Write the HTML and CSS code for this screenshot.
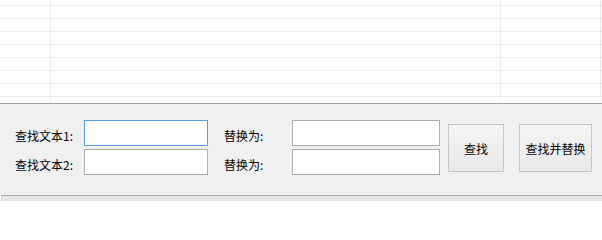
FILE: index.html
```html
<!DOCTYPE html>
<html lang="zh">
<head>
<meta charset="utf-8">
<title>查找替换</title>
<link rel="stylesheet" href="styles.css">
</head>
<body>
<div class="grid">
  <div class="c"></div><div class="c"></div><div class="c"></div><div class="c"></div>
  <div class="c"></div><div class="c"></div><div class="c"></div><div class="c"></div>
  <div class="c"></div><div class="c"></div><div class="c"></div><div class="c"></div>
  <div class="c"></div><div class="c"></div><div class="c"></div><div class="c"></div>
  <div class="c"></div><div class="c"></div><div class="c"></div><div class="c"></div>
  <div class="c"></div><div class="c"></div><div class="c"></div><div class="c"></div>
  <div class="c"></div><div class="c"></div><div class="c"></div><div class="c"></div>
  <div class="c"></div><div class="c"></div><div class="c"></div><div class="c"></div>
  <div class="c"></div><div class="c"></div><div class="c"></div><div class="c"></div>
</div>
<div class="spacer"></div>
<div class="panel">
  <div class="form">
    <label class="lbl">查找文本1:</label>
    <div class="field"><input class="box focused" type="text"></div>
    <label class="lbl">替换为:</label>
    <div class="field"><input class="box wide" type="text"></div>
    <button class="btn find">查找</button>
    <button class="btn replace">查找并替换</button>
    <label class="lbl">查找文本2:</label>
    <div class="field"><input class="box" type="text"></div>
    <label class="lbl">替换为:</label>
    <div class="field"><input class="box wide" type="text"></div>
  </div>
</div>
<div class="status"></div>
</body>
</html>
```

FILE: styles.css
```css
html, body {
  margin: 0;
  padding: 0;
}
body {
  width: 602px;
  height: 201px;
  overflow: hidden;
  background: #ffffff;
  font-family: "Noto Sans CJK SC", "Noto Sans", sans-serif;
  font-size: 12px;
  color: #000;
}
.grid {
  display: grid;
  grid-template-columns: 50px 449px 99px 1px;
  grid-template-rows: 5px repeat(7, 12px) 5px;
  gap: 1px;
  background: #ececec;
}
.c {
  background: #ffffff;
}
.spacer {
  height: 1px;
  background: #ffffff;
}
.panel {
  height: 91px;
  border-top: 1px solid #a5a5a5;
  background: #f0f0f0;
  box-sizing: content-box;
}
.form {
  display: grid;
  grid-template-columns: 69px 140px 68px 156px 71px 73px;
  grid-template-rows: 26px 26px;
  row-gap: 3px;
  padding: 16px 0 0 15px;
}
.lbl {
  line-height: 26px;
  padding-top: 3px;
  height: 26px;
  box-sizing: border-box;
  white-space: nowrap;
}
.field {
  display: flex;
}
.box {
  box-sizing: border-box;
  width: 124px;
  height: 26px;
  margin: 0;
  padding: 0 3px;
  border: 1px solid #acacac;
  background: #ffffff;
  outline: none;
  font: inherit;
}
.box.wide {
  width: 148px;
}
.box.focused {
  border-color: #569de5;
}
.btn {
  grid-row: 1 / span 2;
  align-self: start;
  margin: 4px 0 0 0;
  height: 48px;
  padding: 0;
  box-sizing: border-box;
  border: 1px solid #c6c6c6;
  background: linear-gradient(#f4f4f4, #e9e9e9);
  font: inherit;
  color: #000;
}
.btn.find {
  grid-column: 5;
  width: 56px;
}
.btn.replace {
  grid-column: 6;
  width: 73px;
}
.status {
  height: 5px;
  margin-left: 1px;
  border-top: 1px solid #a8a8a8;
  border-left: 1px solid #d0d0d0;
  background: #e6e6e6;
}
```
